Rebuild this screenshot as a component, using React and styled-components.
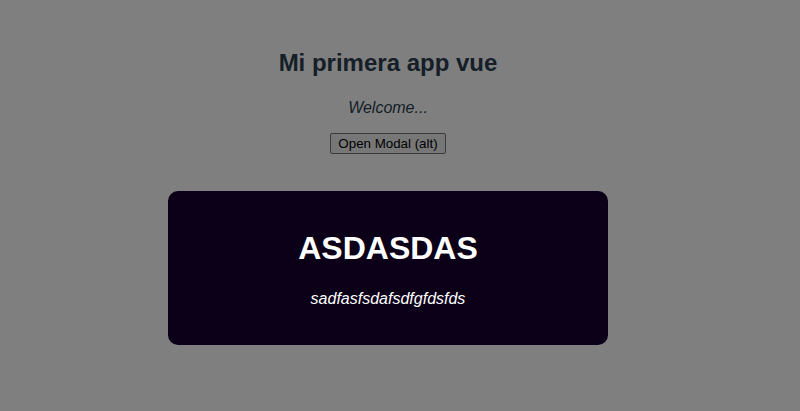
import React from "react";
import styled, { createGlobalStyle } from "styled-components";

const Global = createGlobalStyle`
  html, body { margin: 0; padding: 0; background: #ffffff; }
  body { font-family: "Liberation Sans", Arial, Helvetica, sans-serif; }
`;

const Page = styled.div`
  display: flex;
  flex-direction: column;
  align-items: center;
  padding: 49px 24px 0 0;
  text-align: center;
  color: #2c3e50;
  -webkit-font-smoothing: antialiased;
`;

const Title = styled.h1`
  margin: 0;
  font-size: 24px;
  font-weight: bold;
  line-height: normal;
`;

const Welcome = styled.p`
  margin: 22px 0 0;
  font-size: 16px;
  font-style: italic;
  line-height: normal;
`;

const OpenButton = styled.button`
  margin-top: 16px;
  font-family: "Liberation Sans", Arial, sans-serif;
  font-size: 13.333px;
  line-height: normal;
  padding: 1px 7px;
  color: #000;
  background: #efefef;
  border: 1px solid #767676;
  border-radius: 2px;
  height: 21px;
`;

const Backdrop = styled.div`
  position: fixed;
  inset: 0;
  background: rgba(0, 0, 0, 0.5);
  display: flex;
  flex-direction: column;
  align-items: center;
  padding: 191px 24px 0 0;
`;

const Modal = styled.div`
  width: 400px;
  height: 114px;
  padding: 20px;
  background: #0b0018;
  border-radius: 10px;
  text-align: center;
  color: #ffffff;
  font-family: "Liberation Sans", Arial, sans-serif;
`;

const ModalTitle = styled.h1`
  margin: 19px 0 0;
  font-size: 32px;
  font-weight: bold;
  line-height: normal;
`;

const ModalText = styled.p`
  margin: 23px 0 0;
  font-size: 16px;
  font-style: italic;
  line-height: normal;
`;

export default function App() {
  return (
    <>
      <Global />
      <Page>
        <Title>Mi primera app vue</Title>
        <Welcome>Welcome...</Welcome>
        <OpenButton>Open Modal (alt)</OpenButton>
      </Page>
      <Backdrop>
        <Modal>
          <ModalTitle>ASDASDAS</ModalTitle>
          <ModalText>sadfasfsdafsdfgfdsfds</ModalText>
        </Modal>
      </Backdrop>
    </>
  );
}
